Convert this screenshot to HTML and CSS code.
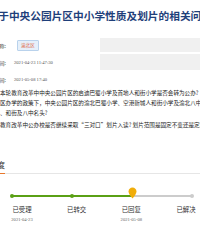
FILE: index.html
```html
<!DOCTYPE html>
<html lang="zh">
<head>
<meta charset="utf-8">
<link rel="stylesheet" href="styles.css">
</head>
<body>
<div class="page">
  <h1 class="title">关于中央公园片区中小学性质及划片的相关问题</h1>
  <div class="info">
    <div class="row row-shaded">
      <div class="cell-main"><span class="label">区县名称:</span><span class="tag">渝北区</span></div>
      <div class="cell-side"></div>
    </div>
    <div class="row row-shaded">
      <div class="cell-main"><span class="label">提问时间:</span><span class="value">2021-04-23 11:47:30</span></div>
      <div class="cell-side"></div>
    </div>
    <div class="row">
      <div class="cell-main"><span class="label">回复时间:</span><span class="value">2021-05-08 17:40</span></div>
    </div>
  </div>
  <div class="question">
    <p class="line">本轮教育改革中中央公园片区的启迪巴蜀小学及首地人和街小学是否会转为公办?</p>
    <p class="line">区办学的政策下，中央公园片区的渝北巴蜀小学、空港新城人和街小学及渝北八中名</p>
    <p class="line">、和街及八中名头?</p>
    <p class="line gap">教育改革中公办校是否继续采取“三对口”划片入读? 划片范围是固定不变还是定期调整?</p>
  </div>
  <div class="section-head"><span class="section-title">办理进度</span></div>
  <div class="progress">
    <div class="track">
      <span class="dot done"></span>
      <span class="dot done"></span>
      <span class="dot current">
        <svg class="pin" viewBox="0 0 10 13" width="9" height="12"><path d="M5 0.5C2.5 0.5 0.6 2.4 0.6 4.8 0.6 7.8 5 12.5 5 12.5S9.4 7.8 9.4 4.8C9.4 2.4 7.5 0.5 5 0.5Z" fill="#f0ad0a"/></svg>
      </span>
      <span class="dot todo"></span>
    </div>
    <div class="steps">
      <div class="step"><span class="step-name">已受理</span><span class="step-date">2021-04-23</span></div>
      <div class="step"><span class="step-name">已转交</span></div>
      <div class="step"><span class="step-name">已回复</span><span class="step-date">2021-05-08</span></div>
      <div class="step"><span class="step-name">已解决</span></div>
    </div>
  </div>
</div>
</body>
</html>
```
FILE: styles.css
```css
html, body {
  margin: 0;
  padding: 0;
  background: #ffffff;
}
body {
  width: 200px;
  height: 240px;
  overflow: hidden;
  font-family: "Noto Sans CJK SC", "Liberation Serif", serif;
  color: #333333;
}
.page {
  width: 200px;
  overflow: hidden;
}
.title {
  margin: 9px 0 0 -12.5px;
  font-size: 10.7px;
  line-height: 13px;
  font-weight: 700;
  color: #1f3f7a;
  white-space: nowrap;
}
.info {
  margin-top: 16px;
  display: flex;
  flex-direction: column;
  gap: 2px;
}
.row {
  display: flex;
  height: 14px;
  align-items: center;
}
.cell-main {
  display: flex;
  align-items: center;
  margin-left: -34px;
  flex: 0 0 134px;
}
.cell-side {
  flex: 1;
  align-self: stretch;
  background: #f0f0f0;
}
.row-shaded:nth-child(2) {
  height: 16px;
}
.label {
  width: 40px;
  text-align: right;
  font-size: 5px;
  color: #333;
  white-space: nowrap;
  flex: none;
}
.tag {
  margin-left: 11px;
  padding: 1px 3px;
  font-size: 4.6px;
  line-height: 7px;
  color: #e0603a;
  background: #e6f0fa;
  border: 1px solid #b9d2ec;
  border-radius: 1px;
}
.value {
  margin-left: 8px;
  font-family: "Liberation Serif", serif;
  font-size: 4.6px;
  color: #555;
  white-space: nowrap;
}
.question {
  margin-top: 2px;
}
.line {
  margin: 0;
  font-size: 5.6px;
  line-height: 10px;
  white-space: nowrap;
  color: #222;
}
.line.gap {
  margin-top: 2px;
}
.section-head {
  margin-top: 29px;
  margin-left: -27px;
  height: 14px;
  display: flex;
  align-items: flex-end;
  border-bottom: 1px solid #e6e6e6;
}
.section-title {
  display: block;
  font-size: 8px;
  line-height: 12px;
  padding-bottom: 2px;
  margin-bottom: -1px;
  color: #333;
  border-bottom: 1px solid #e8782c;
}
.progress {
  padding: 20px 8px 0 12px;
}
.track {
  position: relative;
  display: flex;
  justify-content: space-between;
  align-items: center;
  height: 4px;
}
.track::before {
  content: "";
  position: absolute;
  left: 0;
  right: 0;
  top: 1px;
  height: 2px;
  background: linear-gradient(to right, #5aa015 0, #5aa015 66%, #cccccc 66%, #cccccc 100%);
}
.dot {
  position: relative;
  width: 4px;
  height: 4px;
  border-radius: 50%;
  margin-left: -2px;
  margin-right: -2px;
}
.dot.done { background: #5aa015; }
.dot.todo { background: #cccccc; }
.dot.current { background: transparent; }
.pin {
  position: absolute;
  left: -2.5px;
  bottom: -1px;
}
.steps {
  margin-top: 7px;
  margin-right: -4px;
  display: flex;
  justify-content: space-between;
}
.step {
  width: 20px;
  display: flex;
  flex-direction: column;
  align-items: center;
}
.step-name {
  font-size: 6.4px;
  line-height: 9px;
  color: #333;
  white-space: nowrap;
}
.step-date {
  margin-top: 3px;
  font-family: "Liberation Serif", serif;
  font-size: 4.6px;
  line-height: 6px;
  color: #666;
  white-space: nowrap;
}
```
